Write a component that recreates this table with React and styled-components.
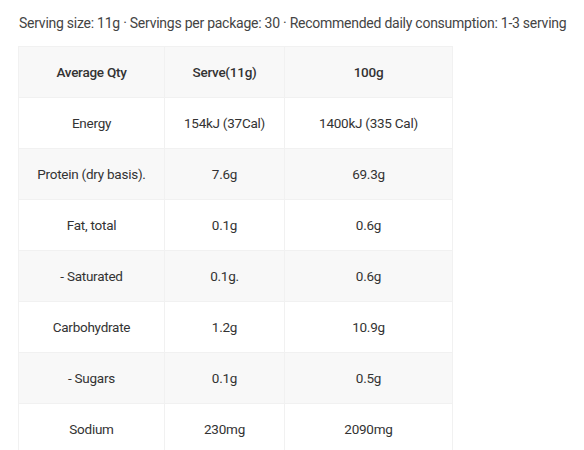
import React from 'react';
import styled, { createGlobalStyle } from 'styled-components';

const GlobalStyle = createGlobalStyle`
  body {
    margin: 0;
    background: #fff;
    font-family: Roboto, "Noto Sans", sans-serif;
  }
`;

const Page = styled.div`
  padding: 13px 18px 0 18px;
`;

const Intro = styled.p`
  margin: 0 0 0 1px;
  font-size: 14px;
  line-height: 20px;
  color: #444;
  letter-spacing: -0.25px;
  white-space: nowrap;
`;

const Table = styled.table`
  margin-top: 13px;
  width: 434px;
  border-collapse: collapse;
  table-layout: fixed;
`;

const Row = styled.tr`
  background: ${p => (p.$shaded ? '#f8f8f8' : '#fff')};
`;

const Cell = styled.td`
  height: 50px;
  padding: 0;
  border: 1px solid #f1f1f1;
  text-align: center;
  vertical-align: middle;
  font-size: 13.5px;
  letter-spacing: -0.25px;
  color: #333;
  font-weight: ${p => (p.$head ? 500 : 400)};
`;

const rows = [
  ['Energy', '154kJ (37Cal)', '1400kJ (335 Cal)'],
  ['Protein (dry basis).', '7.6g', '69.3g'],
  ['Fat, total', '0.1g', '0.6g'],
  ['- Saturated', '0.1g.', '0.6g'],
  ['Carbohydrate', '1.2g', '10.9g'],
  ['- Sugars', '0.1g', '0.5g'],
  ['Sodium', '230mg', '2090mg'],
];

export default function App() {
  return (
    <Page>
      <GlobalStyle />
      <Intro>Serving size: 11g · Servings per package: 30 · Recommended daily consumption: 1-3 serving</Intro>
      <Table>
        <colgroup>
          <col style={{ width: 146 }} />
          <col style={{ width: 120 }} />
          <col style={{ width: 168 }} />
        </colgroup>
        <tbody>
          <Row $shaded>
            <Cell $head>Average Qty</Cell>
            <Cell $head>Serve(11g)</Cell>
            <Cell $head>100g</Cell>
          </Row>
          {rows.map((r, i) => (
            <Row key={r[0]} $shaded={i % 2 === 1}>
              {r.map(v => (
                <Cell key={v}>{v}</Cell>
              ))}
            </Row>
          ))}
        </tbody>
      </Table>
    </Page>
  );
}
